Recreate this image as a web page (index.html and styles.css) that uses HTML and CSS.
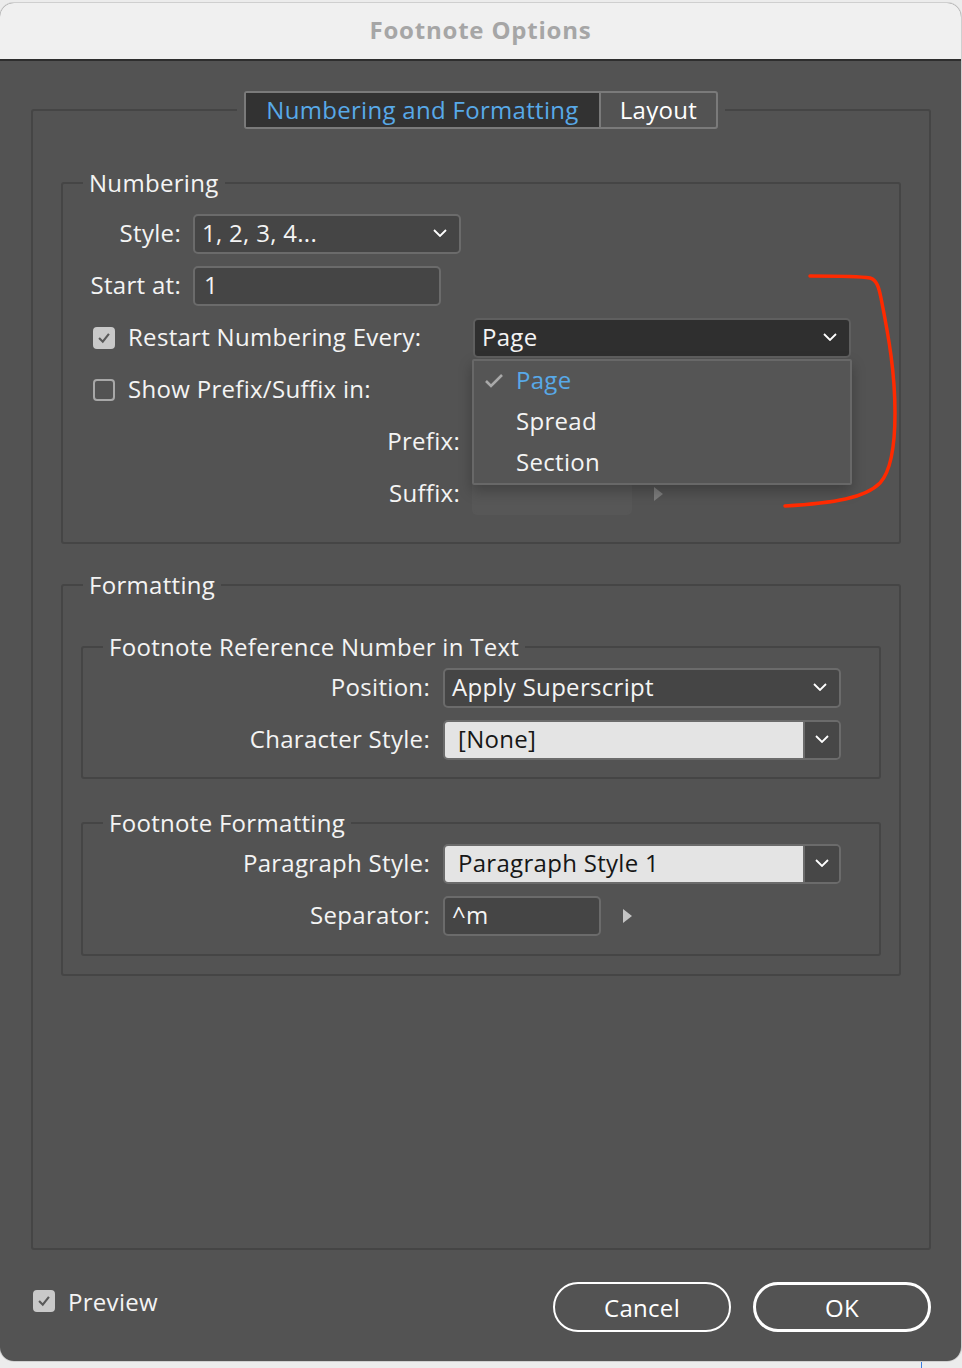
FILE: index.html
```html
<!DOCTYPE html>
<html lang="en">

<head>
    <meta charset="UTF-8">
    <title>Footnote Options</title>
    <link rel="stylesheet" href="styles.css">
</head>

<body>
    <div class="window">
        <div class="title-bar">Footnote Options</div>

        <div class="window-body">
            <fieldset class="tabs">
                <legend>
                    <div class="tab-strip">
                        <span class="tab active">Numbering and Formatting</span>
                        <span class="tab">Layout</span>
                    </div>
                </legend>

                <fieldset class="group numbering">
                    <legend>Numbering</legend>
                    <div class="row">
                        <span class="label short">Style:</span>
                        <div class="select style-select">
                            <span>1, 2, 3, 4...</span>
                            <svg class="chevron" viewBox="0 0 14 8"><polyline points="1,1 7,7 13,1" /></svg>
                        </div>
                    </div>
                    <div class="row">
                        <span class="label short">Start at:</span>
                        <div class="input start-input">1</div>
                    </div>
                    <div class="row">
                        <span class="checkbox checked">
                            <svg viewBox="0 0 22 22"><polyline points="5,11 9.5,15.5 17,6" /></svg>
                        </span>
                        <span class="check-label restart">Restart Numbering Every:</span>
                        <div class="select-wrap">
                            <div class="select page-select">
                                <span>Page</span>
                                <svg class="chevron" viewBox="0 0 14 8"><polyline points="1,1 7,7 13,1" /></svg>
                            </div>
                            <ul class="menu">
                                <li class="selected">
                                    <svg class="tick" viewBox="0 0 20 16"><polyline points="2,8 7,13 18,2" /></svg>
                                    Page
                                </li>
                                <li>Spread</li>
                                <li>Section</li>
                            </ul>
                        </div>
                    </div>
                    <div class="row">
                        <span class="checkbox"></span>
                        <span class="check-label">Show Prefix/Suffix in:</span>
                    </div>
                    <div class="row">
                        <span class="label long">Prefix:</span>
                        <div class="input disabled"></div>
                    </div>
                    <div class="row">
                        <span class="label long">Suffix:</span>
                        <div class="input disabled suffix-input"></div>
                        <span class="arrow dim"></span>
                    </div>
                </fieldset>

                <fieldset class="group formatting">
                    <legend>Formatting</legend>

                    <fieldset class="group sub first-sub">
                        <legend>Footnote Reference Number in Text</legend>
                        <div class="row">
                            <span class="label sub-label">Position:</span>
                            <div class="select wide-select">
                                <span>Apply Superscript</span>
                                <svg class="chevron" viewBox="0 0 14 8"><polyline points="1,1 7,7 13,1" /></svg>
                            </div>
                        </div>
                        <div class="row">
                            <span class="label sub-label">Character Style:</span>
                            <div class="combo">
                                <span class="combo-field">[None]</span>
                                <span class="combo-button">
                                    <svg class="chevron" viewBox="0 0 14 8"><polyline points="1,1 7,7 13,1" /></svg>
                                </span>
                            </div>
                        </div>
                    </fieldset>

                    <fieldset class="group sub second-sub">
                        <legend>Footnote Formatting</legend>
                        <div class="row">
                            <span class="label sub-label">Paragraph Style:</span>
                            <div class="combo">
                                <span class="combo-field">Paragraph Style 1</span>
                                <span class="combo-button">
                                    <svg class="chevron" viewBox="0 0 14 8"><polyline points="1,1 7,7 13,1" /></svg>
                                </span>
                            </div>
                        </div>
                        <div class="row">
                            <span class="label sub-label">Separator:</span>
                            <div class="input separator-input">^m</div>
                            <span class="arrow"></span>
                        </div>
                    </fieldset>
                </fieldset>
            </fieldset>

            <div class="footer">
                <div class="preview">
                    <span class="checkbox checked">
                        <svg viewBox="0 0 22 22"><polyline points="5,11 9.5,15.5 17,6" /></svg>
                    </span>
                    <span>Preview</span>
                </div>
                <div class="buttons">
                    <button class="button">Cancel</button>
                    <button class="button default">OK</button>
                </div>
            </div>
        </div>

        <svg class="markup" viewBox="0 0 961 1358">
            <path d="M810 273 C 835 273, 858 273, 870 275 C 877 277, 879 285, 881 295 C 889 335, 895 370, 895 410 C 895 445, 891 468, 880 480 C 865 495, 835 500, 785 503" />
        </svg>
    </div>
    <div class="desk-line"></div>
</body>

</html>
```

FILE: styles.css
```css
* {
    box-sizing: border-box;
}

body {
    margin: 0;
    background-color: #ececec;
    font-family: "Open Sans", "Liberation Sans", sans-serif;
    font-weight: 500;
    letter-spacing: 0.3px;
    color: #f4f4f4;
    font-size: 24px;
}

.window {
    position: relative;
    width: 961px;
    height: 1358px;
    margin-top: 3px;
    background-color: #535353;
    border-radius: 14px;
    overflow: hidden;
    box-shadow: 0 0 0 1px #cfcfcf;
}

.title-bar {
    height: 58px;
    background-color: #f0f0f0;
    border-bottom: 2px solid #2e2e2e;
    text-align: center;
    line-height: 54px;
    font-weight: 700;
    font-size: 24px;
    letter-spacing: 0.8px;
    color: #a6a6a6;
}

.window-body {
    padding: 30px 30px 0 31px;
}

fieldset {
    margin: 0;
    padding: 0;
    min-width: 0;
}

.tabs {
    height: 1159px;
    border: 2px solid #454545;
    border-radius: 3px;
    padding: 0 28px;
}

.tabs > legend {
    margin: 0 auto;
    padding: 0 7px;
}

.tab-strip {
    display: flex;
    border: 2px solid #7a7a7a;
    border-radius: 3px;
    height: 38px;
}

.tab {
    display: flex;
    align-items: center;
    justify-content: center;
    padding-bottom: 2px;
    color: #ffffff;
}

.tab.active {
    width: 353px;
    background-color: #323232;
    color: #58a9e8;
}

.tab + .tab {
    width: 117px;
    border-left: 2px solid #7a7a7a;
}

.group {
    border: 2px solid #454545;
    border-radius: 3px;
}

.group > legend {
    margin-left: 20px;
    padding: 0 6px;
    line-height: 28px;
}

.numbering {
    margin-top: 40px;
    padding: 17px 0 28px;
}

.formatting {
    margin-top: 27px;
    padding: 34px 0 18px;
}

.sub {
    margin: 0 18px;
    padding: 7px 0 17px;
}

.second-sub {
    margin-top: 30px;
    padding-bottom: 18px;
}

.row {
    display: flex;
    align-items: center;
    height: 40px;
}

.row + .row {
    margin-top: 12px;
}

.label,
.check-label {
    padding-bottom: 3px;
}

.label {
    text-align: right;
    flex-shrink: 0;
    margin-right: 12px;
}

.label.short {
    width: 118px;
}

.label.long {
    width: 397px;
}

.label.sub-label {
    width: 347px;
    margin-right: 13px;
}

.select,
.input {
    display: flex;
    align-items: center;
    justify-content: space-between;
    height: 40px;
    padding: 0 12px 3px 7px;
    background-color: #454545;
    border: 2px solid #6b6b6b;
    border-radius: 5px;
}

.chevron {
    width: 14px;
    height: 8px;
    fill: none;
    stroke: #ffffff;
    stroke-width: 1.8;
}

.style-select {
    width: 268px;
}

.start-input {
    width: 248px;
    padding-left: 9px;
}

.input.disabled {
    width: 160px;
    height: 34px;
    background-color: #575757;
    border-color: #575757;
}

.suffix-input {
    margin-top: 8px;
}

.arrow {
    width: 0;
    height: 0;
    margin-left: 22px;
    border-top: 7px solid transparent;
    border-bottom: 7px solid transparent;
    border-left: 9px solid #c4c4c4;
}

.arrow.dim {
    border-left-color: #7c7c7c;
}

.checkbox {
    flex-shrink: 0;
    width: 22px;
    height: 22px;
    margin-left: 30px;
    border: 2px solid #a8a8a8;
    border-radius: 4px;
}

.checkbox.checked {
    background-color: #c9c9c9;
    border-color: #c9c9c9;
}

.checkbox svg {
    display: block;
    width: 18px;
    height: 18px;
    fill: none;
    stroke: #595959;
    stroke-width: 2.6;
}

.check-label {
    margin-left: 13px;
}

.check-label.restart {
    width: 345px;
}

.select-wrap {
    position: relative;
}

.page-select {
    width: 378px;
    background-color: #2f2f2f;
    border-color: #5f5f5f;
}

.menu {
    position: absolute;
    top: 41px;
    left: -1px;
    width: 380px;
    height: 126px;
    margin: 0;
    padding: 0;
    list-style: none;
    background-color: #555555;
    border: 2px solid #686868;
    border-radius: 2px;
    box-shadow: 0 6px 14px rgba(0, 0, 0, 0.25);
}

.menu li {
    position: relative;
    height: 41px;
    line-height: 38px;
    padding-left: 42px;
}

.menu li.selected {
    color: #58a9e8;
}

.tick {
    position: absolute;
    left: 10px;
    top: 12px;
    width: 20px;
    height: 16px;
    fill: none;
    stroke: #a9a9a9;
    stroke-width: 2.6;
}

.wide-select {
    width: 398px;
}

.combo {
    display: flex;
    width: 398px;
    height: 40px;
    border: 2px solid #6b6b6b;
    border-radius: 5px;
    overflow: hidden;
}

.combo-field {
    flex: 1;
    display: flex;
    align-items: center;
    padding: 0 0 3px 13px;
    background-color: #e4e4e4;
    color: #161616;
}

.combo-button {
    display: flex;
    align-items: center;
    justify-content: center;
    width: 36px;
    padding-bottom: 2px;
    background-color: #474747;
    border-left: 2px solid #6b6b6b;
}

.separator-input {
    width: 158px;
}

.footer {
    display: flex;
    justify-content: space-between;
    align-items: center;
    margin-top: 32px;
    padding-left: 2px;
}

.preview {
    display: flex;
    align-items: center;
    margin-top: -12px;
}

.preview .checkbox {
    margin-left: 0;
    margin-right: 13px;
}

.buttons {
    display: flex;
    gap: 22px;
}

.button {
    width: 178px;
    height: 50px;
    background: none;
    border: 2px solid #ffffff;
    border-radius: 26px;
    color: #ffffff;
    font: inherit;
    letter-spacing: inherit;
    padding: 0;
}

.button.default {
    border-width: 3.5px;
}

.markup {
    position: absolute;
    left: 0;
    top: 0;
    width: 961px;
    height: 1358px;
    pointer-events: none;
}

.markup path {
    fill: none;
    stroke: #ff2a00;
    stroke-width: 3.5;
    stroke-linecap: round;
}

.desk-line {
    width: 1px;
    height: 7px;
    margin-left: 921px;
    background-color: #3d7ee0;
}
```
